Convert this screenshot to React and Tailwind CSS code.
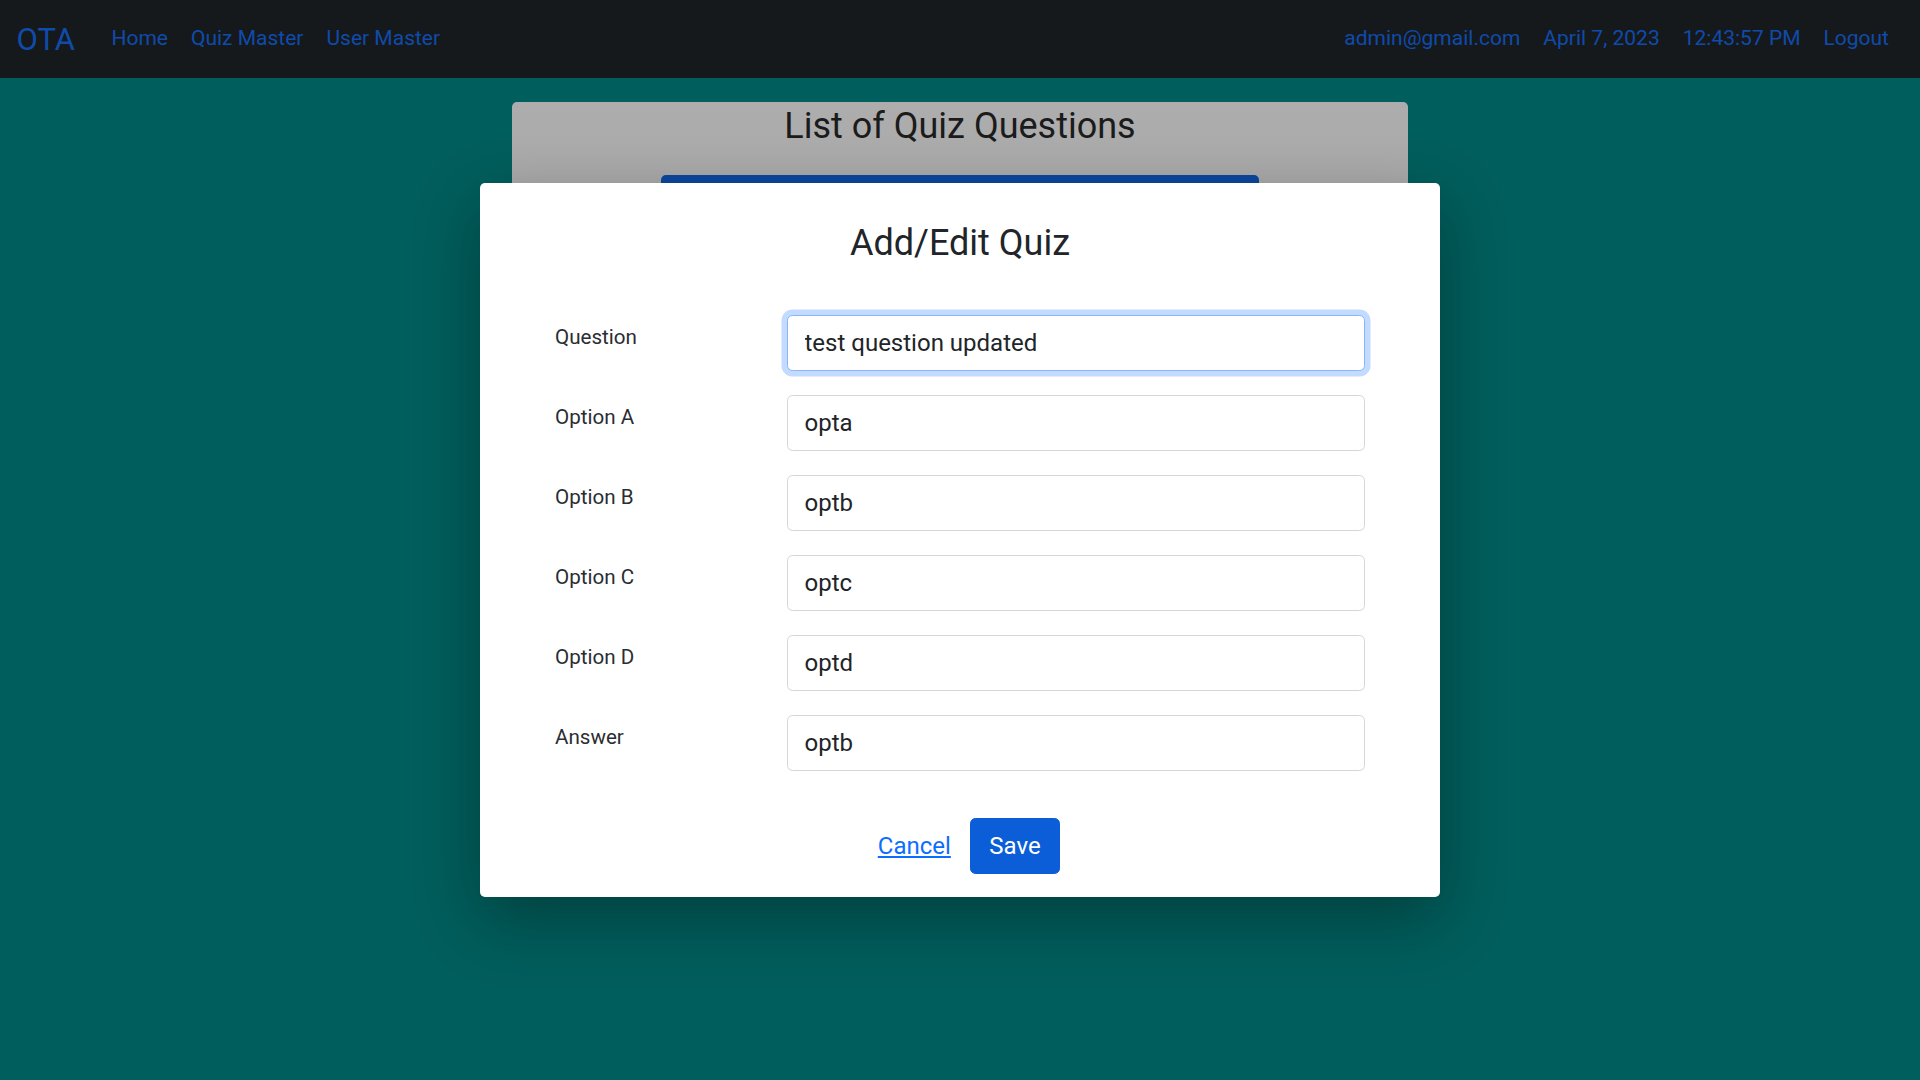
import React from "react";

const rows = [
  { label: "Question", value: "test question updated", focused: true },
  { label: "Option A", value: "opta" },
  { label: "Option B", value: "optb" },
  { label: "Option C", value: "optc" },
  { label: "Option D", value: "optd" },
  { label: "Answer", value: "optb" },
];

export default function App() {
  return (
    <div className="relative min-h-screen bg-[#005e5c] font-['Roboto','Liberation_Sans',sans-serif] text-[#212529]">
      <nav className="flex h-[78px] items-center bg-[#16191c] px-[16.5px] text-[#0f4bab]">
        <span className="mr-[25px] text-[31px] leading-none">OTA</span>
        <div className="flex items-center text-[21px]">
          <span className="px-[11.5px]">Home</span>
          <span className="px-[11.5px]">Quiz Master</span>
          <span className="px-[11.5px]">User Master</span>
        </div>
        <div className="ml-auto flex items-center pr-[3px] text-[21px]">
          <span className="px-[11.5px]">admin@gmail.com</span>
          <span className="px-[11.5px]">April 7, 2023</span>
          <span className="px-[11.5px]">12:43:57 PM</span>
          <span className="px-[11.5px]">Logout</span>
        </div>
      </nav>

      <div className="mx-auto mt-[24px] h-[520px] w-[896px] rounded-[5px] bg-gradient-to-b from-[#adadad] to-[#9c9c9c] pt-[3px]">
        <h2 className="text-center text-[36px] leading-[1.2] text-[#1b1b1b]">
          List of Quiz Questions
        </h2>
        <div className="mx-auto mt-[27px] h-[120px] w-[598px] rounded-t-[5px] bg-[#0b479f]" />
      </div>

      <div className="absolute inset-0 flex justify-center pt-[183px]">
        <div className="h-max w-[960px] rounded-[5px] bg-white px-[75px] pb-[23px] pt-[39px] shadow-[0_22px_66px_rgba(0,0,0,0.32)]">
          <h3 className="text-center text-[36px] leading-[1.2] text-[#212529]">
            Add/Edit Quiz
          </h3>
          <div className="mt-[50px] flex flex-col gap-[24px]">
            {rows.map((r) => (
              <div key={r.label} className="flex">
                <label className="w-[232px] shrink-0 pt-[6.5px] text-[20.6px] leading-[1.5] text-[#2a2d31]">
                  {r.label}
                </label>
                <input
                  readOnly
                  value={r.value}
                  className={
                    r.focused
                      ? "h-[56px] min-w-0 flex-1 rounded-[5.5px] border border-[#86b7fe] bg-white px-[16.5px] text-[24px] leading-[1.5] text-[#212529] shadow-[0_0_0_5.5px_rgba(13,110,253,0.25)] outline-none"
                      : "h-[56px] min-w-0 flex-1 rounded-[5.5px] border border-[#d3d6db] bg-white px-[16.5px] text-[24px] leading-[1.5] text-[#212529] outline-none"
                  }
                />
              </div>
            ))}
          </div>
          <div className="mt-[47px] flex justify-center gap-[2px]">
            <button className="h-[56px] border border-transparent px-[16.5px] text-[24px] leading-[1.5] text-[#0d6efd] underline">
              Cancel
            </button>
            <button className="h-[56px] rounded-[5.5px] border border-[#0b5ed7] bg-[#0b5ed7] px-[18px] text-[24px] leading-[1.5] text-white">
              Save
            </button>
          </div>
        </div>
      </div>
    </div>
  );
}
